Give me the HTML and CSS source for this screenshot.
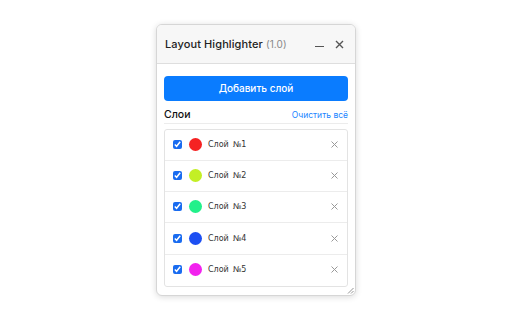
FILE: index.html
```html
<!DOCTYPE html>
<html lang="ru">
<head>
  <meta charset="UTF-8">
  <meta name="viewport" content="width=device-width, initial-scale=1.0">
  <title>Layout Highlighter</title>
  <link rel="stylesheet" href="styles.css">
</head>
<body>
  <div class="panel">
    <div class="header">
      <h1>Layout Highlighter <span class="version">(1.0)</span></h1>
      <div class="controls">
        <span class="minimize"></span>
        <svg class="close" width="9" height="9" viewBox="0 0 9 9">
          <path d="M1 1L8 8M8 1L1 8" stroke="#555" stroke-width="1.4"/>
        </svg>
      </div>
    </div>

    <div class="content">
      <button class="addBtn">Добавить слой</button>

      <div class="layersHead">
        <span class="layersTitle">Слои</span>
        <a href="#" class="clearAll">Очистить всё</a>
      </div>

      <ul class="layers">
        <li class="layer">
          <input type="checkbox" checked>
          <span class="dot" style="background:#f52222"></span>
          <span class="name">Слой №1</span>
          <svg class="remove" width="7" height="7" viewBox="0 0 7 7"><path d="M0.5 0.5L6.5 6.5M6.5 0.5L0.5 6.5"/></svg>
        </li>
        <li class="layer">
          <input type="checkbox" checked>
          <span class="dot" style="background:#c3ef25"></span>
          <span class="name">Слой №2</span>
          <svg class="remove" width="7" height="7" viewBox="0 0 7 7"><path d="M0.5 0.5L6.5 6.5M6.5 0.5L0.5 6.5"/></svg>
        </li>
        <li class="layer">
          <input type="checkbox" checked>
          <span class="dot" style="background:#22f08a"></span>
          <span class="name">Слой №3</span>
          <svg class="remove" width="7" height="7" viewBox="0 0 7 7"><path d="M0.5 0.5L6.5 6.5M6.5 0.5L0.5 6.5"/></svg>
        </li>
        <li class="layer">
          <input type="checkbox" checked>
          <span class="dot" style="background:#1d4ff2"></span>
          <span class="name">Слой №4</span>
          <svg class="remove" width="7" height="7" viewBox="0 0 7 7"><path d="M0.5 0.5L6.5 6.5M6.5 0.5L0.5 6.5"/></svg>
        </li>
        <li class="layer">
          <input type="checkbox" checked>
          <span class="dot" style="background:#f222ee"></span>
          <span class="name">Слой №5</span>
          <svg class="remove" width="7" height="7" viewBox="0 0 7 7"><path d="M0.5 0.5L6.5 6.5M6.5 0.5L0.5 6.5"/></svg>
        </li>
      </ul>
    </div>

    <svg class="grip" width="7" height="7" viewBox="0 0 7 7">
      <path d="M6.5 1L1 6.5M6.5 4L4 6.5" stroke="#888" stroke-width="0.9"/>
    </svg>
  </div>
</body>
</html>
```

FILE: styles.css
```css
* {
  margin: 0;
  padding: 0;
  box-sizing: border-box;
  font-family: "Open Sans", "Noto Sans", sans-serif;
}
body {
  background: #fff;
  display: flex;
  align-items: center;
  justify-content: center;
  min-height: 100vh;
}
.panel {
  position: relative;
  width: 200px;
  height: 272px;
  background: #fff;
  border: 1px solid #d6d6d6;
  border-radius: 6px;
  box-shadow: 0 1px 6px rgba(0,0,0,0.15);
  overflow: hidden;
}
.header {
  height: 39px;
  background: #f7f7f7;
  border-bottom: 1px solid #dedede;
  display: flex;
  align-items: center;
  justify-content: space-between;
  padding: 0 11px 0 8px;
}
h1 {
  font-family: "Inter", "Noto Sans", sans-serif;
  font-size: 11px;
  font-weight: 500;
  color: #222;
  letter-spacing: 0.1px;
}
.version {
  font-family: inherit;
  font-size: 10px;
  font-weight: 400;
  color: #888;
}
.controls {
  display: flex;
  align-items: center;
  gap: 11px;
}
.minimize {
  display: block;
  width: 9px;
  height: 1.5px;
  margin-top: 5px;
  background: #555;
}
.content {
  padding: 11px 7px 0 7px;
}
.addBtn {
  width: 100%;
  height: 25px;
  border: none;
  border-radius: 4px;
  background: #0a7cff;
  color: #fff;
  font-family: "Inter", "Noto Sans", sans-serif;
  font-size: 10px;
  font-weight: 500;
  cursor: pointer;
}
.layersHead {
  display: flex;
  align-items: baseline;
  justify-content: space-between;
  padding: 7px 0 2px 0;
  border-bottom: 1px solid #ececec;
}
.layersTitle {
  font-family: "Inter", "Noto Sans", sans-serif;
  font-size: 10.5px;
  font-weight: 500;
  color: #111;
}
.clearAll {
  font-family: "Inter", "Noto Sans", sans-serif;
  font-size: 8.5px;
  color: #1a85ff;
  text-decoration: none;
}
.layers {
  list-style: none;
  margin-top: 5px;
  border: 1px solid #e3e3e3;
  border-radius: 3px;
}
.layer {
  display: flex;
  align-items: center;
  height: 31.3px;
  padding: 0 9px 1px 8px;
  border-bottom: 1px solid #ececec;
}
.layer:last-child {
  border-bottom: none;
}
.layer input {
  width: 9px;
  height: 9px;
  margin: 0 7px 0 0;
  accent-color: #1a6cf0;
}
.dot {
  width: 13px;
  height: 13px;
  border-radius: 50%;
  margin-right: 6px;
}
.name {
  flex: 1;
  font-family: "DejaVu Sans", sans-serif;
  font-size: 8px;
  color: #333;
  word-spacing: 1.5px;
}
.remove {
  stroke: #999;
  stroke-width: 1;
}
.grip {
  position: absolute;
  right: 1px;
  bottom: 1px;
}
```
